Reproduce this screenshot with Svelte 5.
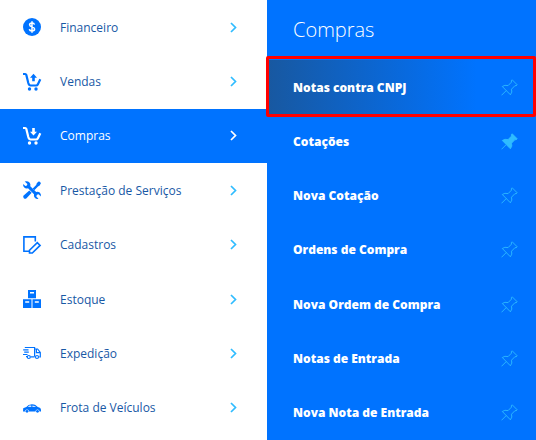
<script lang="ts">
	let active = $state('Compras');
	let selected = $state('Notas contra CNPJ');

	const sections = [
		{ label: 'Financeiro', icon: 'money' },
		{ label: 'Vendas', icon: 'cart-up' },
		{ label: 'Compras', icon: 'cart-down' },
		{ label: 'Prestação de Serviços', icon: 'tools' },
		{ label: 'Cadastros', icon: 'note' },
		{ label: 'Estoque', icon: 'boxes' },
		{ label: 'Expedição', icon: 'truck' },
		{ label: 'Frota de Veículos', icon: 'car' }
	];

	let items = $state([
		{ label: 'Notas contra CNPJ', pinned: false },
		{ label: 'Cotações', pinned: true },
		{ label: 'Nova Cotação', pinned: false },
		{ label: 'Ordens de Compra', pinned: false },
		{ label: 'Nova Ordem de Compra', pinned: false },
		{ label: 'Notas de Entrada', pinned: false },
		{ label: 'Nova Nota de Entrada', pinned: false }
	]);
</script>

<div class="menu">
	<nav class="sections" aria-label="Módulos">
		{#each sections as section}
			<button
				class="section"
				class:active={active === section.label}
				onclick={() => (active = section.label)}
			>
				<svg class="icon" viewBox="0 0 18 18" aria-hidden="true">
					{#if section.icon === 'money'}
						<circle cx="9" cy="9" r="9" fill="currentColor" />
						<path
							d="M11.5 6.6C11.2 5.5 10.3 5 9 5 7.6 5 6.6 5.7 6.6 6.8c0 2.700 5 1.500 5 4.300 0 1.200-1.100 1.900-2.600 1.900-1.400 0-2.400-.7-2.600-1.900M9 3.300v11.400"
							class="line light"
						/>
					{:else if section.icon === 'cart-up' || section.icon === 'cart-down'}
						<path
							d="M0 1h2.200Q3 1 3.300 1.900L5.300 10Q6 12.500 7.600 12.500h5.600Q14.200 12.500 14.800 11.400L17.300 6.200"
							class="line thick"
						/>
						<circle cx="6.500" cy="16" r="1.700" fill="currentColor" />
						<circle cx="13" cy="16" r="1.700" fill="currentColor" />
						{#if section.icon === 'cart-up'}
							<path d="M10.500.8l3.500 3.900h-2.200V8.300H9.200V4.700H7z" fill="currentColor" />
						{:else}
							<path d="M10.500 8.600L14 4.700h-2.200V1H9.200v3.700H7z" fill="currentColor" />
						{/if}
					{:else if section.icon === 'tools'}
						<path
							d="M1.700.5l2.700 2.600-.5 1.500-1.500.5L.2 3Q-.3 5.300 1.300 6.600 2.800 7.900 5 7.200l6 6q-.5 2 .8 3.500Q13.300 18.400 15.500 17.800l-2.200-2.400.6-1.700 1.700-.5 2.200 2.200q.6-2.300-1.100-3.800-1.500-1.200-3.500-.6L7.300 5.200q.6-2-.8-3.700Q4.700-.2 1.700.5z"
							fill="currentColor"
						/>
						<path
							d="M16 .2l2 1.900-1.300 2.500-1.700.9-3.700 3.700-1.600-1.600L13.200 4l.7-2z"
							fill="currentColor"
						/>
						<path d="M6.300 9.400l2.400 2.400-5.200 5.500q-1.300 1.100-2.700-.1-1.300-1.400-.1-2.700z" fill="currentColor" />
					{:else if section.icon === 'note'}
						<path d="M12.300 5.500V.9H.9v14.400h5.400" class="line" />
						<path d="M6.500 14.200l7.800-7.600 2.800 2.800-7.800 7.600H6.500z" class="line" />
					{:else if section.icon === 'boxes'}
						<path d="M5 0h8v8.200H5zM0 9.200h8.500V18H0zM9.500 9.200H18V18H9.500z" fill="currentColor" />
						<path d="M7 2.800h4M2.200 12h4M11.800 12h4" class="line light" />
					{:else if section.icon === 'truck'}
						<path
							d="M1.800 3.500h9.800v8.900M.2 5.800h5.300M1.200 8.200h4.600M0 10.500h4.500M3 12.700h1M7.600 12.900h4M11.600 5h3l2.700 3.400v4.500h-1M13.400 5v3.600h3.900"
							class="line thin"
						/>
						<circle cx="5.800" cy="13" r="1.500" class="line thin" />
						<circle cx="14" cy="13" r="1.500" class="line thin" />
					{:else if section.icon === 'car'}
						<path
							d="M.2 9.300L3.300 8Q5.200 5.200 8.900 5.200c3.200 0 4.200 1 5.900 2.900q3.200.5 3.200 3v1.300h-1.500a2 2 0 0 0-4 0H6a2 2 0 0 0-4 0H0z"
							fill="currentColor"
						/>
						<circle cx="4" cy="12.300" r="1.400" fill="currentColor" />
						<circle cx="14.500" cy="12.300" r="1.400" fill="currentColor" />
						<path d="M4.800 8L6.300 6.500h2V8zM9.400 8V6.400q2.300 0 3.800 1.600z" fill="#cfe5ff" />
					{/if}
				</svg>
				<span class="label">{section.label}</span>
				<svg class="chevron" viewBox="0 0 7 11" aria-hidden="true">
					<path d="M1 1l4.500 4.500L1 10" />
				</svg>
			</button>
		{/each}
	</nav>

	<section class="panel">
		<h2>{active}</h2>
		<ul>
			{#each items as item}
				<li class:selected={selected === item.label}>
					<a href="#top" onclick={() => (selected = item.label)}>{item.label}</a>
					<button
						class="pin"
						class:pinned={item.pinned}
						aria-label="Fixar {item.label}"
						aria-pressed={item.pinned}
						onclick={() => (item.pinned = !item.pinned)}
					>
						<svg viewBox="0 0 17 17" aria-hidden="true">
							<path
								d="M11.200.8l5 5-1.200 1-1-.2-3.500 3.600.3 2.900-1.400 2.700L1.300 7.500l2.600-1.200 3.200.3 3.400-3.500-.2-1.300z"
							/>
							<path d="M5.300 11.500L.5 16.300" />
						</svg>
					</button>
				</li>
			{/each}
		</ul>
	</section>
</div>

<style>
	:global(body) {
		background: #fff;
	}

	.menu {
		display: grid;
		grid-template-columns: 267px 1fr;
		min-height: 100vh;
		font-family: 'Open Sans', 'Noto Sans', sans-serif;
	}

	.sections {
		display: grid;
		grid-auto-rows: minmax(54px, 1fr);
		padding-bottom: 5px;
	}

	.section {
		display: flex;
		align-items: center;
		padding: 0 30px 0 23px;
		border: 0;
		background: none;
		color: #0073ff;
		font: inherit;
		font-size: 12px;
		text-align: left;
		cursor: pointer;
	}

	.icon {
		width: 18px;
		height: 18px;
		margin-right: 19px;
		overflow: visible;
	}

	.line {
		fill: none;
		stroke: currentColor;
		stroke-width: 1.6;
	}

	.line.thick {
		stroke-width: 2.2;
	}

	.line.thin {
		stroke-width: 1.2;
	}

	.line.light {
		stroke: #fff;
		stroke-width: 1.5;
	}

	.label {
		flex: 1;
		color: #1858a5;
	}

	.chevron {
		width: 7px;
		height: 11px;
		fill: none;
		stroke: #2fbcff;
		stroke-width: 1.7;
	}

	.active {
		background: #0073ff;
		color: #fff;
	}

	.active .label {
		color: #fff;
	}

	.active .chevron {
		stroke: #fff;
	}

	.panel {
		display: flex;
		flex-direction: column;
		background: #0073ff;
		color: #fff;
	}

	h2 {
		margin: 0;
		padding: 0 26px;
		font-size: 20px;
		font-weight: 300;
		line-height: 60px;
	}

	ul {
		display: grid;
		flex: 1;
		grid-auto-rows: minmax(54px, 1fr);
		margin: 0;
		padding: 0;
		list-style: none;
	}

	li {
		position: relative;
		display: flex;
		align-items: center;
		justify-content: space-between;
		padding: 0 18px 0 26px;
	}

	li a {
		color: #fff;
		font-size: 12px;
		font-weight: 800;
		text-decoration: none;
	}

	.selected {
		background: linear-gradient(90deg, #1858a0, #0073ff 78%);
	}

	.selected::after {
		content: '';
		position: absolute;
		inset: -4px 0 -3px -1px;
		border: 3px solid #f00;
		border-radius: 2px;
		pointer-events: none;
	}

	.pin {
		display: flex;
		padding: 0;
		border: 0;
		background: none;
		cursor: pointer;
	}

	.pin svg {
		width: 17px;
		height: 17px;
		fill: none;
		stroke: #2fbcff;
		stroke-width: 0.9;
	}

	.pin.pinned svg {
		fill: #2fbcff;
	}
</style>
